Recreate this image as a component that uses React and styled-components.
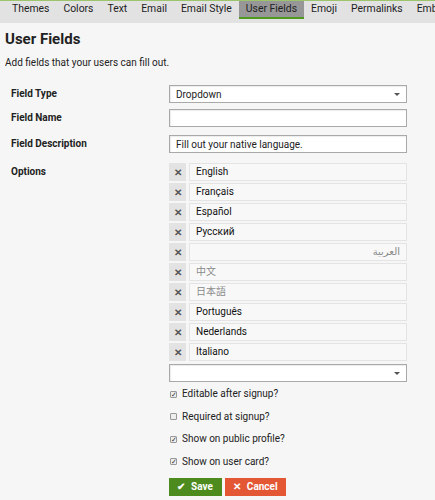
import React from "react";
import styled, { createGlobalStyle } from "styled-components";

const Global = createGlobalStyle`
  body {
    margin: 0;
    background: #f6f6f6;
    font-family: Roboto, "Liberation Sans", sans-serif;
    color: #222;
  }
`;

const Page = styled.div`
  border-top: 1px solid #9bc46c;
  min-height: 499px;
`;

const Nav = styled.div`
  display: flex;
  height: 22px;
  background: #e2e2e2;
  padding-left: 5px;
  white-space: nowrap;
  overflow: hidden;
`;

const Tab = styled.div`
  height: 16px;
  padding: 0 7px;
  font-size: 10.4px;
  line-height: 16px;
  color: #222;
  background: ${(p) => (p.active ? "#979797" : "transparent")};
  border-bottom: 2px solid ${(p) => (p.active ? "#4f9a1e" : "transparent")};
`;

const Content = styled.div`
  padding: 0 5px;
`;

const Title = styled.h1`
  margin: 7px 0 0;
  font-size: 15px;
  font-weight: 700;
  line-height: 18px;
`;

const Intro = styled.p`
  margin: 8px 0 0;
  font-size: 10px;
  line-height: 14px;
`;

const Form = styled.div`
  padding: 15px 0 0 6px;
`;

const Row = styled.div`
  display: flex;
  align-items: flex-start;
  margin-bottom: ${(p) => p.gap || 0}px;
`;

const Label = styled.div`
  width: 158px;
  font-size: 10px;
  font-weight: 700;
  line-height: 18px;
`;

const Control = styled.div`
  width: 238px;
`;

const Box = styled.div`
  box-sizing: border-box;
  height: 18px;
  background: #fff;
  border: 1px solid #a9a9a9;
  box-shadow: inset 1px 1px 1px rgba(0, 0, 0, 0.08);
  display: flex;
  align-items: center;
  justify-content: space-between;
  padding: 0 6px 0 6px;
  font-size: 10px;
`;

const Caret = styled.span`
  width: 0;
  height: 0;
  border-left: 3px solid transparent;
  border-right: 3px solid transparent;
  border-top: 3px solid #555;
`;

const Options = styled.div`
  display: flex;
  flex-direction: column;
  gap: 2px;
`;

const Option = styled.div`
  display: flex;
  gap: 3px;
  height: 18px;
`;

const Remove = styled.div`
  width: 17px;
  background: #e3e3e3;
  display: flex;
  align-items: center;
  justify-content: center;
  color: #555;
  font-size: 10px;
  font-weight: 700;
`;

const OptInput = styled.div`
  flex: 1;
  box-sizing: border-box;
  background: #f8f8f8;
  border: 1px solid #e4e4e4;
  font-size: 10px;
  line-height: 16px;
  padding: 0 6px;
  font-weight: 400;
  color: ${(p) => (p.light ? "#8a8a8a" : "#111")};
  text-align: ${(p) => (p.rtl ? "right" : "left")};
  font-family: Roboto, "Noto Sans CJK SC", "DejaVu Sans", sans-serif;
`;

const Checks = styled.div`
  margin-top: 5px;
  display: flex;
  flex-direction: column;
  gap: 8.5px;
`;

const Check = styled.label`
  display: flex;
  align-items: center;
  gap: 5px;
  font-size: 10px;
  line-height: 14px;
  padding-left: 1px;
`;

const Tick = styled.span`
  box-sizing: border-box;
  width: 7px;
  height: 7px;
  border: 1px solid #999;
  border-radius: 1px;
  background: #eee;
  position: relative;
  &::after {
    content: ${(p) => (p.on ? '"✓"' : '""')};
    position: absolute;
    left: 0;
    top: -4px;
    font-size: 7px;
    color: #333;
  }
`;

const Buttons = styled.div`
  display: flex;
  gap: 3px;
  margin-top: 9px;
`;

const Button = styled.div`
  height: 18px;
  display: flex;
  align-items: center;
  gap: 6px;
  padding: 0 ${(p) => p.pad}px 0 8px;
  background: ${(p) => p.bg};
  color: #fff;
  font-size: 10px;
  font-weight: 700;
`;

const tabs = ["Themes", "Colors", "Text", "Email", "Email Style", "User Fields", "Emoji", "Permalinks", "Embedding"];

const langs = [
  { t: "English" },
  { t: "Français" },
  { t: "Español" },
  { t: "Русский" },
  { t: "العربية", rtl: true, light: true },
  { t: "中文", light: true },
  { t: "日本語", light: true },
  { t: "Português" },
  { t: "Nederlands" },
  { t: "Italiano" },
];

const checks = [
  ["Editable after signup?", true],
  ["Required at signup?", false],
  ["Show on public profile?", true],
  ["Show on user card?", true],
];

export default function App() {
  return (
    <Page>
      <Global />
      <Nav>
        {tabs.map((t) => (
          <Tab key={t} active={t === "User Fields"}>
            {t}
          </Tab>
        ))}
      </Nav>
      <Content>
        <Title>User Fields</Title>
        <Intro>Add fields that your users can fill out.</Intro>
        <Form>
          <Row gap={6}>
            <Label>Field Type</Label>
            <Control>
              <Box>
                Dropdown <Caret />
              </Box>
            </Control>
          </Row>
          <Row gap={8}>
            <Label>Field Name</Label>
            <Control>
              <Box />
            </Control>
          </Row>
          <Row gap={10}>
            <Label>Field Description</Label>
            <Control>
              <Box>Fill out your native language.</Box>
            </Control>
          </Row>
          <Row>
            <Label>Options</Label>
            <Control>
              <Options>
                {langs.map((l) => (
                  <Option key={l.t}>
                    <Remove>✕</Remove>
                    <OptInput rtl={l.rtl} light={l.light}>
                      {l.t}
                    </OptInput>
                  </Option>
                ))}
                <Box style={{ marginTop: 1 }}>
                  <span />
                  <Caret />
                </Box>
              </Options>
              <Checks>
                {checks.map(([t, on]) => (
                  <Check key={t}>
                    <Tick on={on} />
                    {t}
                  </Check>
                ))}
              </Checks>
              <Buttons>
                <Button bg="#4d8b1e" pad={9}>
                  <span>✔</span>Save
                </Button>
                <Button bg="#e45735" pad={8}>
                  <span>✕</span>Cancel
                </Button>
              </Buttons>
            </Control>
          </Row>
        </Form>
      </Content>
    </Page>
  );
}
